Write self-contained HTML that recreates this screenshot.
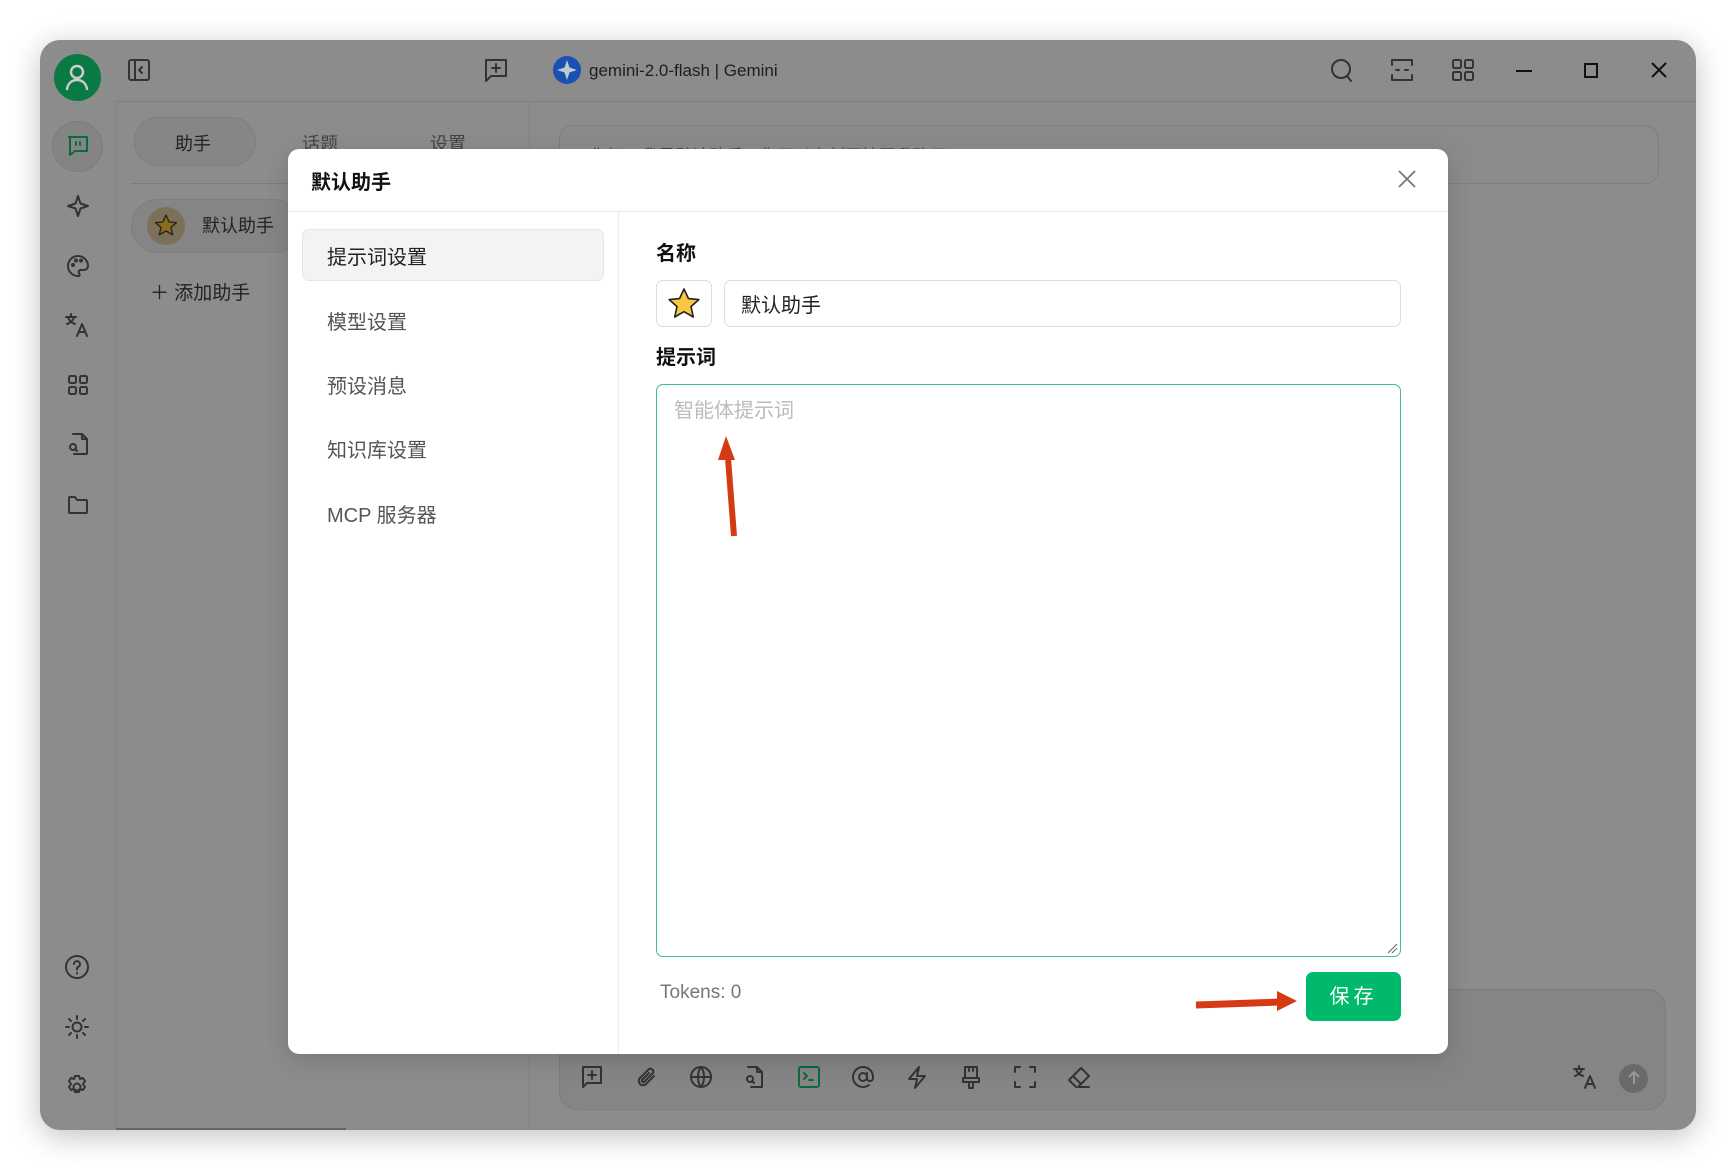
<!DOCTYPE html>
<html><head><meta charset="utf-8"><style>
*{box-sizing:border-box;margin:0;padding:0}
body{width:1736px;height:1171px;background:#fff;position:relative;overflow:hidden;font-family:"Liberation Sans","Noto Sans CJK SC",sans-serif;color:#222}
.abs{position:absolute}
.win{left:40px;top:40px;width:1656px;height:1090px;border-radius:20px;background:#8c8c8c;box-shadow:0 6px 30px rgba(0,0,0,.25);overflow:hidden}
svg{position:absolute;overflow:visible}
.ic{fill:none;stroke:#333;stroke-width:2;stroke-linecap:round;stroke-linejoin:round}
.nav{position:absolute;left:327px;font-size:20px;color:#555}
</style></head><body>
<div class="abs win">
  <div class="abs" style="left:76px;top:61px;width:1580px;height:1px;background:#7e7e7e"></div>
  <div class="abs" style="left:76px;top:61px;width:1px;height:1029px;background:#828282"></div>
  <div class="abs" style="left:489px;top:61px;width:1px;height:1029px;background:#828282"></div>
  <div class="abs" style="left:76px;top:1088px;width:230px;height:2px;background:#666"></div>
</div>
<div class="abs" style="left:54px;top:54px;width:47px;height:47px;border-radius:50%;background:#0a7a45"></div>
<svg style="left:64px;top:63px" width="26" height="28" class="ic"><circle cx="13" cy="9" r="6" stroke="#ccc" stroke-width="2.4" fill="none"/><path d="M3 26c1-6 5-9 10-9s9 3 10 9" stroke="#ccc" stroke-width="2.4" fill="none"/></svg>
<div class="abs" style="left:52px;top:121px;width:51px;height:51px;border-radius:50%;background:#848484;border:1px solid #7d7d7d"></div>
<svg style="left:66px;top:134px" width="24" height="24" class="ic" stroke="#0a6b3c"><path d="M3 3h18v14H9l-5 4V3z" stroke="#0a6b3c"/><path d="M10 8v3M14 8v3" stroke="#0a6b3c"/></svg>
<svg style="left:66px;top:194px" width="24" height="24" class="ic"><path d="M12 2l2.5 7.5L22 12l-7.5 2.5L12 22l-2.5-7.5L2 12l7.5-2.5z"/></svg>
<svg style="left:66px;top:254px" width="24" height="24" class="ic"><path d="M12 2a10 10 0 0 0 0 20c2 0 2-2 1-3s0-3 2-3h3a4 4 0 0 0 4-4C22 6 17 2 12 2z"/><circle cx="7" cy="11" r="1"/><circle cx="10" cy="6.5" r="1"/><circle cx="15" cy="6.5" r="1"/></svg>
<svg style="left:64px;top:312px" width="26" height="26" class="ic"><path d="M2 5h10M7 2v3M4 5c1 4 4 6 7 7M10 5c-1 4-4 6-7 7M13 24l5-12 5 12M15 20h6"/></svg>
<svg style="left:66px;top:373px" width="24" height="24" class="ic"><rect x="3" y="3" width="7" height="7" rx="1.5"/><rect x="14" y="3" width="7" height="7" rx="1.5"/><rect x="3" y="14" width="7" height="7" rx="1.5"/><rect x="14" y="14" width="7" height="7" rx="1.5"/></svg>
<svg style="left:66px;top:432px" width="24" height="24" class="ic"><path d="M7 2h9l5 5v14a1 1 0 0 1-1 1H8M16 2v5h5"/><circle cx="7" cy="15" r="3"/><path d="M9 17l2 2"/></svg>
<svg style="left:66px;top:493px" width="24" height="24" class="ic"><path d="M3 5a1 1 0 0 1 1-1h5l2 3h9a1 1 0 0 1 1 1v11a1 1 0 0 1-1 1H4a1 1 0 0 1-1-1z"/></svg>
<svg style="left:64px;top:954px" width="26" height="26" class="ic"><circle cx="13" cy="13" r="11"/><path d="M10 10a3 3 0 1 1 4 3c-1 .5-1 1-1 2.5M13 19v.5"/></svg>
<svg style="left:64px;top:1014px" width="26" height="26" class="ic"><circle cx="13" cy="13" r="4.5"/><path d="M13 2v3M13 21v3M2 13h3M21 13h3M5 5l2 2M19 19l2 2M5 21l2-2M19 7l2-2"/></svg>
<svg style="left:64px;top:1074px" width="26" height="26" class="ic"><circle cx="13" cy="13" r="3.5"/><path d="M11 2h4l1 3 3-1 2 3-2 3 2 3-2 3-3-1-1 3h-4l-1-3-3 1-2-3 2-3-2-3 2-3 3 1z"/></svg>
<svg style="left:128px;top:59px" width="22" height="22" class="ic"><rect x="1" y="1" width="20" height="20" rx="2"/><path d="M7 1v20M14 8l-3 3 3 3"/></svg>
<svg style="left:485px;top:59px" width="22" height="24" class="ic"><path d="M1 1h20v16H6l-5 5z"/><path d="M11 5v8M7 9h8"/></svg>
<svg style="left:553px;top:56px" width="28" height="28"><circle cx="14" cy="14" r="14" fill="#1a4fb3"/><path d="M14 4l2.5 7.5L24 14l-7.5 2.5L14 24l-2.5-7.5L4 14l7.5-2.5z" fill="#bcc"/></svg>
<div class="abs" style="left:589px;top:61px;font-size:17px;color:#1e1e1e">gemini-2.0-flash | Gemini</div>
<svg style="left:1330px;top:58px" width="24" height="26" class="ic"><circle cx="11" cy="11" r="9"/><path d="M17 18l4 5"/></svg>
<svg style="left:1390px;top:58px" width="24" height="24" class="ic"><path d="M2 7V2h20v5M2 17v5h20v-5M6 12h3M15 12h3"/></svg>
<svg style="left:1451px;top:58px" width="24" height="24" class="ic"><rect x="2" y="2" width="8" height="8" rx="1.5"/><rect x="14" y="2" width="8" height="8" rx="1.5"/><rect x="2" y="14" width="8" height="8" rx="1.5"/><rect x="14" y="14" width="8" height="8" rx="1.5"/></svg>
<div class="abs" style="left:1516px;top:70px;width:16px;height:2px;background:#111"></div>
<div class="abs" style="left:1584px;top:63px;width:14px;height:15px;border:2px solid #111"></div>
<svg style="left:1651px;top:62px" width="16" height="16"><path d="M1 1l14 14M15 1L1 15" stroke="#111" stroke-width="2"/></svg>
<div class="abs" style="left:134px;top:117px;width:122px;height:49px;border-radius:25px;background:#868686;border:1px solid #7e7e7e"></div>
<div class="abs" style="left:175px;top:130px;font-size:18px;color:#222">助手</div>
<div class="abs" style="left:302px;top:130px;font-size:18px;color:#444">话题</div>
<div class="abs" style="left:430px;top:130px;font-size:18px;color:#444">设置</div>
<div class="abs" style="left:131px;top:183px;width:160px;height:1px;background:#7c7c7c"></div>
<div class="abs" style="left:131px;top:199px;width:170px;height:54px;border-radius:27px;background:#858585;border:1px solid #7e7e7e"></div>
<div class="abs" style="left:147px;top:207px;width:38px;height:38px;border-radius:50%;background:#7c7158"></div>
<svg style="left:154px;top:214px" width="24" height="24"><path d="M12 1l3.2 7 7.3.6-5.5 4.8 1.7 7.4L12 17l-6.7 3.8 1.7-7.4-5.5-4.8 7.3-.6z" fill="#8a6c1e" stroke="#222" stroke-width="1.3" stroke-linejoin="round"/></svg>
<div class="abs" style="left:202px;top:212px;font-size:18px;color:#222">默认助手</div>
<div class="abs" style="left:150px;top:278px;font-size:19px;color:#222">＋ 添加助手</div>
<div class="abs" style="left:559px;top:125px;width:1100px;height:59px;border-radius:14px;border:1px solid #7e7e7e;background:#8b8b8b;overflow:hidden"><div style="position:absolute;left:30px;top:16px;font-size:17px;color:#444">你好，我是默认助手，你可以立刻开始跟我聊天</div></div>
<div class="abs" style="left:559px;top:989px;width:1107px;height:121px;border-radius:18px;border:1px solid #7c7c7c;background:#858585"></div>
<svg style="left:582px;top:1066px" width="600" height="24" class="ic" stroke="#333">
<path d="M1 1h18v16H5l-4 4zM10 5v8M6 9h8"/>
<path d="M72 10l-8 8a4 4 0 0 1-6-6l9-9a3 3 0 0 1 4 4l-9 9a1.5 1.5 0 0 1-2-2l7-7"/>
<g transform="translate(108,0)"><circle cx="11" cy="11" r="10"/><path d="M1 11h20M11 1c-4 5-4 15 0 20M11 1c4 5 4 15 0 20"/></g>
<g transform="translate(162,0)"><path d="M4 1h9l5 5v15H7M13 1v5h5"/><circle cx="6" cy="13" r="3"/><path d="M8 15l2 2"/></g>
<g transform="translate(216,0)" stroke="#0a6b3c"><rect x="1" y="1" width="20" height="20" rx="2"/><path d="M6 7l3 3-3 3M11 14h4"/></g>
<g transform="translate(270,0)"><circle cx="11" cy="11" r="4"/><path d="M15 7v5a3 3 0 0 0 6 0v-1a10 10 0 1 0-4 8"/></g>
<g transform="translate(324,0)"><path d="M13 1L3 13h8l-2 9 10-12h-8z"/></g>
<g transform="translate(378,0)"><path d="M5 1h12v11H5zM3 12h16v4H3zM9 16v6h4v-6M9 1v4M13 1v4"/></g>
<g transform="translate(432,0)"><path d="M1 6V1h5M16 1h5v5M21 16v5h-5M6 21H1v-5"/></g>
<g transform="translate(486,0)"><path d="M8 21L1 14 13 2l8 8-11 11h11M5 10l8 8"/></g>
</svg>
<svg style="left:1572px;top:1064px" width="26" height="26" class="ic"><path d="M2 5h10M7 2v3M4 5c1 4 4 6 7 7M10 5c-1 4-4 6-7 7M13 24l5-12 5 12M15 20h6"/></svg>
<div class="abs" style="left:1619px;top:1064px;width:29px;height:29px;border-radius:50%;background:#6a6a6a"></div>
<svg style="left:1626px;top:1070px" width="16" height="16"><path d="M8 14V2M3 7l5-5 5 5" stroke="#999" stroke-width="2" fill="none"/></svg>

<div class="abs" style="left:288px;top:149px;width:1160px;height:905px;background:#fff;border-radius:11px;box-shadow:0 6px 24px rgba(0,0,0,.15)">
  <div class="abs" style="left:23px;top:17px;font-size:20px;font-weight:bold;color:#111">默认助手</div>
  <svg style="left:1110px;top:21px" width="18" height="18"><path d="M1 1l16 16M17 1L1 17" stroke="#777" stroke-width="1.8"/></svg>
  <div class="abs" style="left:0;top:62px;width:1160px;height:1px;background:#e8e8e8"></div>
  <div class="abs" style="left:330px;top:63px;width:1px;height:842px;background:#ececec"></div>
  <div class="abs" style="left:14px;top:80px;width:302px;height:52px;border-radius:7px;background:#f3f3f3;border:1px solid #e6e6e6"></div>
</div>
<div class="nav" style="top:241px;color:#222">提示词设置</div>
<div class="nav" style="top:306px">模型设置</div>
<div class="nav" style="top:370px">预设消息</div>
<div class="nav" style="top:434px">知识库设置</div>
<div class="nav" style="top:499px">MCP 服务器</div>
<div class="abs" style="left:656px;top:237px;font-size:20px;font-weight:bold;color:#111">名称</div>
<div class="abs" style="left:656px;top:280px;width:56px;height:47px;border:1px solid #ddd;border-radius:7px"></div>
<svg style="left:667px;top:287px" width="34" height="34"><path d="M17 2l4.5 9.6 10.3 1-7.8 7 2.3 10.4L17 24.7 7.7 30l2.3-10.4-7.8-7 10.3-1z" fill="#f8c642" stroke="#222" stroke-width="1.6" stroke-linejoin="round"/></svg>
<div class="abs" style="left:724px;top:280px;width:677px;height:47px;border:1px solid #ddd;border-radius:7px"></div>
<div class="abs" style="left:741px;top:289px;font-size:20px;color:#222">默认助手</div>
<div class="abs" style="left:656px;top:341px;font-size:20px;font-weight:bold;color:#111">提示词</div>
<div class="abs" style="left:656px;top:384px;width:745px;height:573px;border:1.5px solid #3cc08a;border-radius:7px"></div>
<div class="abs" style="left:674px;top:394px;font-size:20px;color:#bbb">智能体提示词</div>
<svg style="left:1386px;top:942px" width="12" height="12"><path d="M2 11l9-9M6 11l5-5" stroke="#666" stroke-width="1"/></svg>
<div class="abs" style="left:660px;top:982px;font-size:19px;color:#777">Tokens: 0</div>
<div class="abs" style="left:1306px;top:972px;width:95px;height:49px;border-radius:7px;background:#00b96b;color:#fff;font-size:20px;text-align:center;line-height:51px;letter-spacing:4px">保存</div>
<svg style="left:0;top:0" width="1736" height="1171">
<path d="M734 536L728 458" stroke="#d63a12" stroke-width="6"/>
<path d="M726 436l-8 24h17z" fill="#d63a12"/>
<path d="M1196 1005L1280 1002" stroke="#d63a12" stroke-width="7"/>
<path d="M1297 1001l-20-10v20z" fill="#d63a12"/>
</svg>
</body></html>
